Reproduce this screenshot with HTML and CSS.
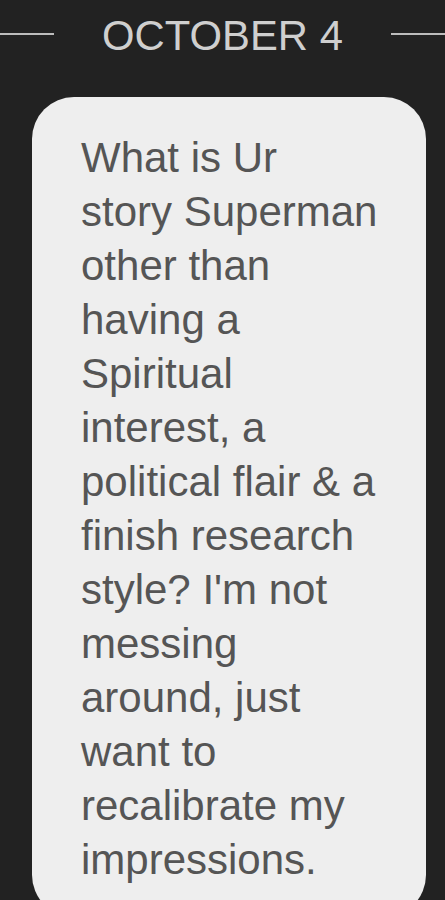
FILE: index.html
```html
<!DOCTYPE html>
<html>
<head>
<meta charset="utf-8">
<link rel="stylesheet" href="styles.css">
</head>
<body>
<div class="screen">
  <div class="date-row">
    <span class="rule"></span>
    <span class="date">OCTOBER 4</span>
    <span class="rule"></span>
  </div>
  <div class="bubble">
    <p class="msg">What is Ur story Superman other than having a Spiritual interest, a political flair &amp; a finish research style? I'm not messing around, just want to recalibrate my impressions.</p>
  </div>
</div>
</body>
</html>
```
FILE: styles.css
```css
html, body {
  margin: 0;
  padding: 0;
  background: #222222;
}
.screen {
  width: 445px;
  height: 900px;
  overflow: hidden;
  font-family: "Liberation Sans", Arial, sans-serif;
}
.date-row {
  display: flex;
  align-items: center;
  gap: 48px;
  padding-top: 12px;
}
.rule {
  flex: 1;
  height: 2px;
  background: #bdbdbd;
  margin-bottom: 4px;
}
.date {
  font-size: 41.8px;
  line-height: 48px;
  color: #cfcfcf;
  white-space: nowrap;
}
.bubble {
  margin: 37px 0 0 32px;
  width: 394px;
  box-sizing: border-box;
  padding: 34px 47.5px 30px 49px;
  background: #eeeeee;
  border-radius: 42px;
}
.msg {
  margin: 0;
  font-size: 42px;
  line-height: 54px;
  color: #555555;
}
```
